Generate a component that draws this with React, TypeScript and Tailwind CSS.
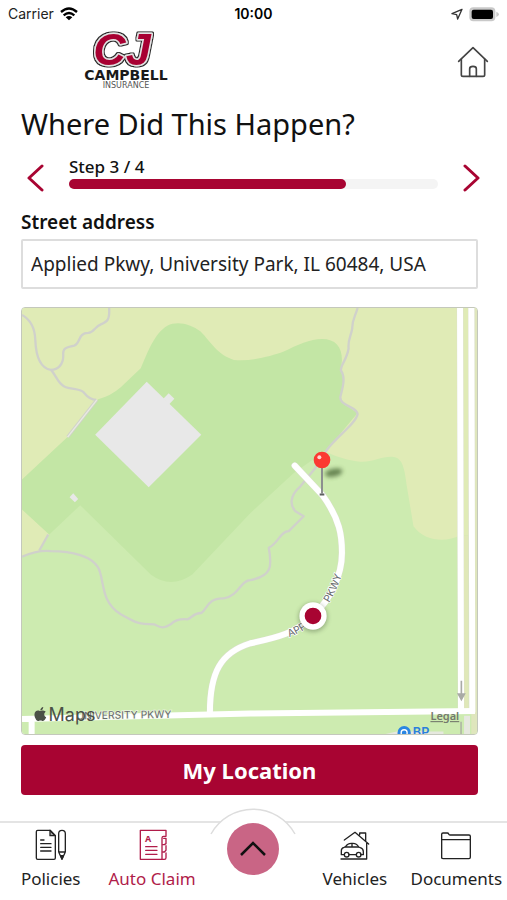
import { useState } from "react";
import type { ReactNode } from "react";
import { FaApple } from "react-icons/fa";

interface NavItemProps {
  label: string;
  active?: boolean;
  children: ReactNode;
}

function NavItem({ label, active = false, children }: NavItemProps) {
  return (
    <a
      href={`#${label.toLowerCase().replace(" ", "-")}`}
      className={`flex flex-col items-center gap-1 pt-1.5 ${active ? "text-[#b01c4a]" : "text-[#222222]"}`}
    >
      <span className="flex h-8 items-center">{children}</span>
      <span className="text-[17px] leading-7 whitespace-nowrap">{label}</span>
    </a>
  );
}

function PoliciesIcon() {
  return (
    <svg className="h-8 w-8" viewBox="0 0 96 96" fill="none" stroke="currentColor" strokeWidth="4" strokeLinejoin="round" strokeLinecap="round">
      <path d="M45 4H8q-4 0-4 4v79q0 4 4 4h49q4 0 4-4V20z" />
      <path d="M45 4v16h16z" fill="currentColor" fillOpacity="0.4" />
      <path d="M17 33h10M17 44h31M17 55h31M17 66h31" />
      <path d="M71 69V14q0-10 10-10t10 10v55L81 91zM71 69h20" />
      <path d="M77 80l4 10 4-10z" fill="currentColor" />
    </svg>
  );
}

function ClaimIcon() {
  return (
    <svg className="h-8 w-8" viewBox="-10 0 96 96" fill="none" stroke="currentColor" strokeWidth="4" strokeLinejoin="round" strokeLinecap="round">
      <path d="M80 20V4H3v87h65V27q0-5 5-5h7z" />
      <path d="M73 28h7v16l-5 3h-5M80 50v14l-5 5h-5M80 72v14q0 5-5 5h-7" />
      <path d="M19 53h34M19 64h34M19 76h34" />
      <text x="17" y="38" fontSize="27" fontWeight="700" fill="currentColor" stroke="none" className="font-['Noto_Sans',sans-serif]">
        A
      </text>
    </svg>
  );
}

function VehiclesIcon() {
  return (
    <svg className="h-8 w-8" viewBox="-2 -7 96 96" fill="none" stroke="currentColor" strokeWidth="4" strokeLinejoin="round" strokeLinecap="round">
      <path d="M14 26L46 3l41 35M60 10V5h18v24M81 36v47H4" />
      <path d="M14 70H5V58q0-8 8-10l5-2q5-10 17-10h5q11 0 17 11l5 2q9 3 9 12v9h-8M28 70h22" />
      <path d="M18 47h38M37 37v10" />
      <circle cx="21" cy="70" r="7" />
      <circle cx="57" cy="70" r="7" />
    </svg>
  );
}

function DocumentsIcon() {
  return (
    <svg className="h-8 w-8" viewBox="-2 -8 96 96" fill="none" stroke="currentColor" strokeWidth="4" strokeLinejoin="round">
      <path d="M3 79V8q0-4 4-4h13q3 0 4 3t4 3h57q4 0 4 4v63q0 4-4 4H7q-4 0-4-4zM3 24h86" />
    </svg>
  );
}

function HomeIcon() {
  return (
    <svg className="h-8 w-8" viewBox="0 0 96 96" fill="none" stroke="#444444" strokeWidth="5" strokeLinejoin="round" strokeLinecap="round">
      <path d="M5 46L48 5l43 41" />
      <path d="M13 40v46q0 5 5 5h60q5 0 5-5V40" />
      <path d="M38 91V68q0-7 10-7t10 7v23" />
    </svg>
  );
}

function Logo() {
  return (
    <svg className="h-16 w-24 overflow-visible" viewBox="0 0 96 64" role="img" aria-label="CJ Campbell Insurance">
      <defs>
        <filter id="outline" x="-20%" y="-20%" width="140%" height="140%">
          <feMorphology in="SourceAlpha" operator="dilate" radius="1" result="grown" />
          <feFlood floodColor="#2a2a2a" />
          <feComposite in2="grown" operator="in" result="edge" />
          <feMerge>
            <feMergeNode in="edge" />
            <feMergeNode in="SourceGraphic" />
          </feMerge>
        </filter>
      </defs>
      <text
        x="44"
        y="37"
        textAnchor="middle"
        fontSize="45"
        fontWeight="700"
        fontStyle="italic"
        fill="#a80432"
        stroke="#e4e4e4"
        strokeWidth="3"
        paintOrder="stroke"
        strokeLinejoin="round"
        filter="url(#outline)"
        className="font-['Liberation_Sans',sans-serif]"
      >
        CJ
      </text>
      <text x="48" y="52" textAnchor="middle" fontSize="14" fontWeight="700" fill="#1a1a1a" className="font-['DejaVu_Sans',sans-serif]">
        CAMPBELL
      </text>
      <text x="48" y="60" textAnchor="middle" fontSize="8" fill="#555555" className="font-['DejaVu_Sans',sans-serif]">
        INSURANCE
      </text>
    </svg>
  );
}

function StatusBar() {
  return (
    <div className="grid h-7 grid-cols-3 items-center px-2 font-['Inter',sans-serif] text-sm text-[#222222]">
      <div className="flex items-center gap-1.5">
        <span>Carrier</span>
        <svg className="h-[14px] w-[18px]" viewBox="0 0 54 42" fill="none" stroke="#000000" strokeWidth="7">
          <path d="M3 15q24-21 48 0M11 25q16-14 32 0" />
          <path d="M27 40L17 31q10-8 20 0z" fill="#000000" stroke="none" />
        </svg>
      </div>
      <span className="text-center font-semibold text-black">10:00</span>
      <div className="flex items-center justify-end gap-1.5">
        <svg className="size-3" viewBox="0 0 36 36" fill="none" stroke="#333333" strokeWidth="4" strokeLinejoin="round">
          <path d="M33 4L3 17l14 3 3 13z" />
        </svg>
        <svg className="h-[15px] w-[30px]" viewBox="0 0 90 45">
          <rect x="1" y="1" width="78" height="42" rx="12" fill="#c9c9c9" />
          <rect x="8" y="8" width="64" height="28" rx="6" fill="#000000" />
          <path d="M82 14q8 3 8 8t-8 8z" fill="#c9c9c9" />
        </svg>
      </div>
    </div>
  );
}

function LocationMap() {
  return (
    <svg className="block h-auto w-full" viewBox="33 24 1368 1281" role="img" aria-label="Map of Applied Pkwy">
      <defs>
        <filter id="soft" x="-50%" y="-50%" width="200%" height="200%">
          <feGaussianBlur stdDeviation="7" />
        </filter>
        <path id="appliedWest" d="M836 1014Q905 988 945 930" />
        <path id="appliedEast" d="M957 911Q985 865 1002 800" />
      </defs>

      {/* land cover */}
      <rect x="33" y="24" width="1368" height="1281" fill="#cdebb0" />
      <path d="M33 24H1401V708H1350C1310 728 1245 728 1210 680L1190 560C1183 500 1175 475 1150 472C1120 468 1080 490 1050 486C1020 484 980 472 955 460L600 400L33 540Z" fill="#e0ebb6" />
      <path d="M33 628L115 705L85 755L33 770Z" fill="#e0ebb6" />
      <path
        d="M33 540L170 412L262 298Q300 288 330 262L390 205C410 160 430 100 470 77C500 62 540 72 570 95C600 125 620 165 670 180C720 185 780 170 820 155C860 135 900 117 935 117C975 117 995 140 995 180L992 210L1000 240L990 295L1005 315L1042 340L950 450L850 520L720 640L545 825Q480 870 420 825L208 617L115 705L33 630Z"
        fill="#c3e6a5"
      />

      {/* buildings */}
      <g fill="#e8e8e8">
        <path d="M408 246L572 405L414 563L253 405Z" />
        <path d="M474 280L491 297L475 314L458 297Z" />
        <path d="M187 581L202 598L192 608L176 593Z" />
      </g>

      {/* trails */}
      <g fill="none" stroke="#d0d1cb" strokeWidth="7" strokeLinejoin="round">
        <path d="M33 45C60 60 72 90 73 120C75 170 90 205 120 210C135 225 140 250 160 260C180 270 205 265 218 277C230 292 240 300 256 300" />
        <path d="M295 24C297 60 290 65 270 73C252 80 250 98 232 99C200 99 210 130 190 137C165 142 155 145 157 165C158 195 140 210 120 210" />
        <path d="M258 300L170 412" strokeWidth="9" />
        <path d="M1042 24C1035 50 1025 60 1026 85C1022 110 1012 120 1015 145C1010 180 990 195 992 212C1008 235 995 270 990 292C990 320 1040 320 1042 343C1038 370 980 410 950 450L915 505L870 560C835 590 840 620 855 635L880 650L835 695C810 695 805 730 775 745C785 800 785 830 720 842C690 842 685 890 640 897C590 895 590 930 572 941C550 940 545 955 530 960C505 958 490 965 480 975C455 990 450 985 430 975C380 975 375 970 330 945C275 910 280 860 268 820C255 765 170 755 120 755C90 752 60 760 33 772" />
        <path d="M85 753L112 705" />
      </g>
      <path d="M258 300L170 412" stroke="#e9ebe0" strokeWidth="4" />

      {/* roads */}
      <rect x="1384" y="24" width="17" height="1281" fill="#dfe6bd" />
      <rect x="1358" y="708" width="18" height="520" fill="#e0e8b8" />
      <g fill="none" stroke="#dcdfd0" strokeWidth="20" strokeLinecap="round">
        <path d="M1350 24L1353 1230M1384 24L1386 1235" />
        <path d="M853 498L935 585C990 660 995 710 995 760C995 830 960 900 908 950C860 1000 800 1015 720 1032C630 1060 598 1120 598 1240" />
      </g>
      <g fill="none" stroke="#ffffff" strokeWidth="18">
        <path d="M1350 24L1353 1235M1384 24L1387 1240" />
        <path d="M853 498L935 585C990 660 995 710 995 760C995 830 960 900 908 950C860 1000 800 1015 720 1032C630 1060 598 1120 598 1240" strokeLinecap="round" />
        <path d="M33 1260L720 1243L1395 1236M62 1260V1305" />
      </g>
      <rect x="1362" y="1250" width="18" height="55" fill="#e6e8df" />
      <path d="M1353 1268V1305" stroke="#a8aaa2" strokeWidth="4" />
      <path d="M1354 1145V1196M1345 1185l9 16 9-16z" stroke="#a9aaa6" strokeWidth="5" fill="#a9aaa6" />

      {/* street names */}
      <g fontSize="31" fill="#66696b" className="font-['Inter',sans-serif]">
        <text x="197" y="1261" transform="rotate(-1 197 1261)" stroke="#eef6e4" strokeWidth="4" paintOrder="stroke">
          UNIVERSITY PKWY
        </text>
        <g stroke="#ffffff" strokeWidth="4" paintOrder="stroke">
          <text>
            <textPath href="#appliedWest">APPLIED</textPath>
          </text>
          <text>
            <textPath href="#appliedEast">PKWY</textPath>
          </text>
        </g>
      </g>

      {/* gas station on the lower edge */}
      <path d="M1125 1305L1160 1297H1300V1305Z" fill="#e6e8df" />
      <circle cx="1182" cy="1301" r="20" fill="#2a86e2" />
      <circle cx="1182" cy="1301" r="9" fill="none" stroke="#ffffff" strokeWidth="4" />
      <text x="1208" y="1314" fontSize="38" fontWeight="600" fill="#2a7fdc" className="font-['Inter',sans-serif]">
        BP
      </text>

      {/* attribution */}
      <g className="fill-[#4b5147] text-[#4b5147]">
        <FaApple x="64" y="1221" size={48} />
        <text x="113" y="1267" fontSize="54" className="font-['Inter',sans-serif]">
          Maps
        </text>
      </g>
      <a href="#legal">
        <text x="1261" y="1263" fontSize="33" fontWeight="600" fill="#74796d" textDecoration="underline" className="font-['Noto_Sans',sans-serif]">
          Legal
        </text>
      </a>

      {/* pin */}
      <ellipse cx="970" cy="519" rx="27" ry="12" fill="#3c5a2c" opacity="0.7" filter="url(#soft)" transform="rotate(-12 970 519)" />
      <path d="M935 500V582" stroke="#8c8f8f" strokeWidth="6" />
      <path d="M928 585h14" stroke="#5c5f5f" strokeWidth="6" />
      <circle cx="935" cy="481" r="25" fill="#fb3a32" />
      <circle cx="927" cy="473" r="6" fill="#ffd5d0" />

      {/* current position */}
      <circle cx="908" cy="954" r="44" fill="#4a5c3c" opacity="0.4" filter="url(#soft)" />
      <circle cx="908" cy="950" r="41" fill="#ffffff" />
      <circle cx="908" cy="950" r="25" fill="#a80432" />
    </svg>
  );
}

export default function App() {
  const [address, setAddress] = useState("Applied Pkwy, University Park, IL 60484, USA");
  const step = 3;
  const totalSteps = 4;

  return (
    <div className="flex min-h-screen flex-col bg-white font-['Noto_Sans',sans-serif] text-[#111111]">
      <StatusBar />

      <header className="flex h-16 items-center justify-between pr-[18px] pl-[78px]">
        <Logo />
        <button type="button" aria-label="Home" className="pt-1">
          <HomeIcon />
        </button>
      </header>

      <main className="flex flex-col">
        <h1 className="mt-3 pl-[21px] text-[29px] leading-10">Where Did This Happen?</h1>

        <div className="mt-2 flex items-center gap-[25px] px-[26px]">
          <button type="button" aria-label="Previous step" className="pt-3">
            <svg className="h-7 w-[18px]" viewBox="0 0 18 28" fill="none" stroke="#a80432" strokeWidth="3" strokeLinecap="round" strokeLinejoin="round">
              <path d="M16 2L3 14l13 12" />
            </svg>
          </button>
          <div className="flex-1">
            <p className="text-[17px] leading-6 font-medium">
              Step {step} / {totalSteps}
            </p>
            <div className="h-2.5 rounded-full bg-[#f4f4f4]">
              <div className="h-2.5 rounded-full bg-[#a80432]" style={{ width: `${(step / totalSteps) * 100}%` }} />
            </div>
          </div>
          <button type="button" aria-label="Next step" className="pt-3">
            <svg className="h-7 w-[18px]" viewBox="0 0 18 28" fill="none" stroke="#a80432" strokeWidth="3" strokeLinecap="round" strokeLinejoin="round">
              <path d="M2 2l13 12L2 26" />
            </svg>
          </button>
        </div>

        <div className="mt-3.5 flex flex-col pr-[29px] pl-[21px]">
          <label htmlFor="street" className="text-[19px] leading-8 font-semibold">
            Street address
          </label>
          <input
            id="street"
            type="text"
            value={address}
            onChange={(e) => setAddress(e.target.value)}
            className="mt-px h-[50px] w-full rounded-xs border-2 border-[#dddddd] px-2 text-[19px] text-[#222222]"
          />
          <div className="mt-[18px] overflow-hidden rounded-sm border border-[#c4c8bc]">
            <LocationMap />
          </div>
          <button type="button" className="mt-2.5 h-[50px] rounded-sm bg-[#a80432] text-[22px] font-bold text-white">
            My Location
          </button>
        </div>
      </main>

      <nav className="relative mt-auto grid h-[79px] grid-cols-5 border-t-2 border-[#e4e4e4]">
        <NavItem label="Policies">
          <PoliciesIcon />
        </NavItem>
        <NavItem label="Auto Claim" active>
          <ClaimIcon />
        </NavItem>
        <div className="flex justify-center">
          <svg className="absolute -top-4 h-[28px] w-[88px]" viewBox="0 0 88 28">
            <path d="M2 27A48 48 0 0 1 86 27" fill="#ffffff" stroke="#dddddd" strokeWidth="1.5" />
          </svg>
          <button type="button" aria-label="Open menu" className="relative flex size-[52px] items-center justify-center rounded-full bg-[#c96585]">
            <svg className="h-4 w-7" viewBox="0 0 28 16" fill="none" stroke="#111111" strokeWidth="2.5">
              <path d="M2 14L14 2l12 12" />
            </svg>
          </button>
        </div>
        <NavItem label="Vehicles">
          <VehiclesIcon />
        </NavItem>
        <NavItem label="Documents">
          <DocumentsIcon />
        </NavItem>
      </nav>
    </div>
  );
}
